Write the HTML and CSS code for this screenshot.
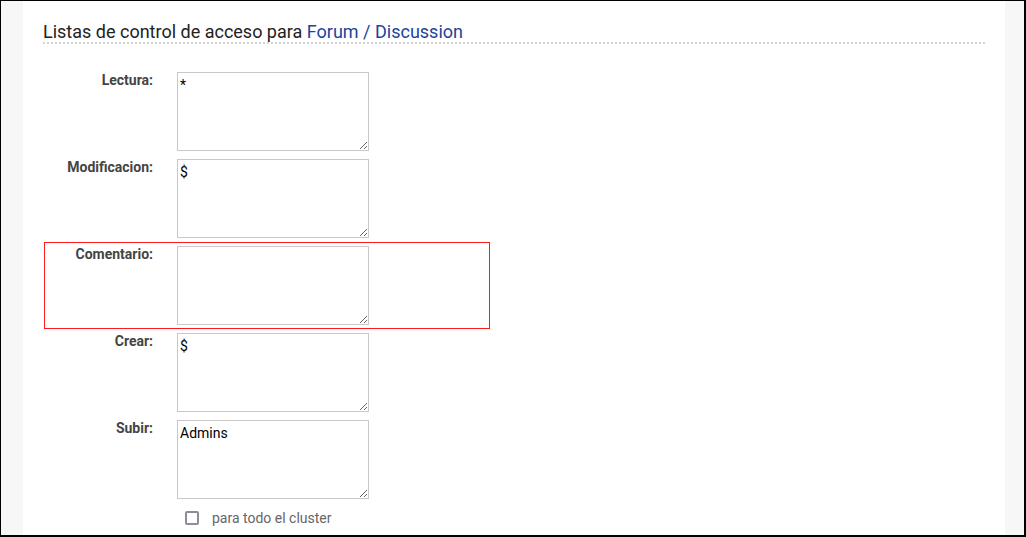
FILE: index.html
```html
<!DOCTYPE html>
<html lang="es">
<head>
  <meta charset="UTF-8">
  <title>Listas de control de acceso</title>
  <link rel="stylesheet" href="styles.css">
</head>
<body>
  <div class="frame">
    <div class="panel">
      <h2 class="acl-title">Listas de control de acceso para <a href="#">Forum / Discussion</a></h2>

      <div class="acl-row">
        <label class="acl-label">Lectura:</label>
        <div class="acl-field"><textarea>*</textarea></div>
      </div>

      <div class="acl-row">
        <label class="acl-label">Modificacion:</label>
        <div class="acl-field"><textarea>$</textarea></div>
      </div>

      <!-- highlighted row -->
      <div class="acl-row acl-row--marked">
        <label class="acl-label">Comentario:</label>
        <div class="acl-field"><textarea></textarea></div>
      </div>

      <div class="acl-row">
        <label class="acl-label">Crear:</label>
        <div class="acl-field"><textarea>$</textarea></div>
      </div>

      <div class="acl-row">
        <label class="acl-label">Subir:</label>
        <div class="acl-field"><textarea>Admins</textarea></div>
      </div>

      <div class="acl-check">
        <span class="checkbox"></span>
        <span>para todo el cluster</span>
      </div>
    </div>
  </div>
</body>
</html>
```

FILE: styles.css
```css
* {
  margin: 0;
  padding: 0;
  box-sizing: border-box;
}

body {
  font-family: Roboto, "Liberation Sans", sans-serif;
  background-color: #fff;
}

.frame {
  width: 1026px;
  height: 537px;
  border-style: solid;
  border-color: #000;
  border-width: 1px 2px 2px 1px;
  background-color: #f7f7f7;
  overflow: hidden;
}

.panel {
  margin-left: 22px;
  width: 982px;
  height: 100%;
  background-color: #fff;
  padding: 20px 20px 0 20px;
}

.acl-title {
  font-size: 18px;
  font-weight: normal;
  color: #222;
  line-height: 21px;
  border-bottom: 2px dotted #d4d4d4;
  margin-bottom: 24px;
}

.acl-title a {
  color: #1c449c;
  text-decoration: none;
}

.acl-row {
  display: flex;
  width: 446px;
  height: 87px;
  margin-left: 1px;
  border: 1px solid transparent;
  padding-top: 3px;
}

.acl-row--marked {
  border-color: #ff1a1a;
}

.acl-label {
  width: 108px;
  margin-right: 24px;
  text-align: right;
  font-size: 14px;
  font-weight: bold;
  color: #444;
  line-height: 16px;
}

.acl-field textarea {
  display: block;
  width: 192px;
  height: 79px;
  border: 1px solid #c8c8c8;
  padding: 4px 2px 2px;
  font-family: Roboto, "Liberation Sans", sans-serif;
  font-size: 14px;
  line-height: 17px;
  color: #000;
}

.acl-check {
  display: flex;
  align-items: center;
  gap: 13px;
  margin: 6px 0 0 142px;
  font-size: 14px;
  color: #666;
  line-height: 18px;
}

.checkbox {
  width: 14px;
  height: 14px;
  border: 2px solid #8c8c9c;
  border-radius: 2px;
}
```
